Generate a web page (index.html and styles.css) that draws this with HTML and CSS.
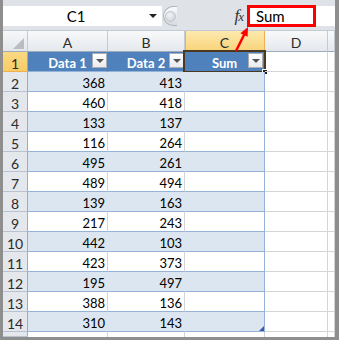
FILE: index.html
```html
<!DOCTYPE html>
<html lang="en">

<head>
    <meta charset="UTF-8">
    <meta name="viewport" content="width=device-width, initial-scale=1.0">
    <title>Sum column</title>
    <link rel="stylesheet" href="styles.css">
</head>

<body>
    <div class="app">
        <!-- Barre de formule -->
        <div class="formula-bar">
            <div class="name-box"><span class="name">C1</span><span class="caret"></span></div>
            <div class="grip"><span class="knob"></span></div>
            <div class="fx-area"><span class="fx">f<span class="fx-x">x</span></span></div>
            <div class="formula-input">Sum</div>
            <div class="callout"></div>
        </div>

        <!-- Feuille -->
        <div class="sheet">
            <div class="corner"><span class="corner-mark"></span></div>
            <div class="col-head">A</div>
            <div class="col-head">B</div>
            <div class="col-head active">C</div>
            <div class="col-head">D</div>
            <div class="col-head edge"></div>

            <div class="row-head active">1</div>
            <div class="th">Data 1<span class="drop"></span></div>
            <div class="th">Data 2<span class="drop"></span></div>
            <div class="th current">Sum<span class="drop"></span><span class="select"><span class="handle"></span></span></div>
            <div class="cell"></div>
            <div class="cell"></div>

            <div class="row-head">2</div>
            <div class="td band">368</div><div class="td band">413</div><div class="td band last"></div>
            <div class="cell"></div><div class="cell"></div>

            <div class="row-head">3</div>
            <div class="td">460</div><div class="td">418</div><div class="td last"></div>
            <div class="cell"></div><div class="cell"></div>

            <div class="row-head">4</div>
            <div class="td band">133</div><div class="td band">137</div><div class="td band last"></div>
            <div class="cell"></div><div class="cell"></div>

            <div class="row-head">5</div>
            <div class="td">116</div><div class="td">264</div><div class="td last"></div>
            <div class="cell"></div><div class="cell"></div>

            <div class="row-head">6</div>
            <div class="td band">495</div><div class="td band">261</div><div class="td band last"></div>
            <div class="cell"></div><div class="cell"></div>

            <div class="row-head">7</div>
            <div class="td">489</div><div class="td">494</div><div class="td last"></div>
            <div class="cell"></div><div class="cell"></div>

            <div class="row-head">8</div>
            <div class="td band">139</div><div class="td band">163</div><div class="td band last"></div>
            <div class="cell"></div><div class="cell"></div>

            <div class="row-head">9</div>
            <div class="td">217</div><div class="td">243</div><div class="td last"></div>
            <div class="cell"></div><div class="cell"></div>

            <div class="row-head">10</div>
            <div class="td band">442</div><div class="td band">103</div><div class="td band last"></div>
            <div class="cell"></div><div class="cell"></div>

            <div class="row-head">11</div>
            <div class="td">423</div><div class="td">373</div><div class="td last"></div>
            <div class="cell"></div><div class="cell"></div>

            <div class="row-head">12</div>
            <div class="td band">195</div><div class="td band">497</div><div class="td band last"></div>
            <div class="cell"></div><div class="cell"></div>

            <div class="row-head">13</div>
            <div class="td">388</div><div class="td">136</div><div class="td last"></div>
            <div class="cell"></div><div class="cell"></div>

            <div class="row-head">14</div>
            <div class="td band">310</div><div class="td band">143</div><div class="td band last"><span class="resize"></span></div>
            <div class="cell"></div><div class="cell"></div>

            <div class="row-head tail"></div>
            <div class="cell tail"></div><div class="cell tail"></div><div class="cell tail"></div>
            <div class="cell tail"></div><div class="cell tail"></div>
        </div>

        <!-- Flèche rouge -->
        <svg class="arrow" width="336" height="60" viewBox="0 0 336 60">
            <line x1="233" y1="51" x2="241.5" y2="34" stroke="#ff0000" stroke-width="2.5" />
            <polygon points="245,27 244.6,36.8 237.4,33.2" fill="#ff0000" />
        </svg>
    </div>
</body>

</html>
```

FILE: styles.css
```css
* {
    box-sizing: border-box;
}

body {
    margin: 0;
    width: 339px;
    height: 340px;
    overflow: hidden;
    background-color: #8e8e8e;
    font-family: Lato, "Liberation Sans", sans-serif;
    color: #000000;
}

.app {
    position: relative;
    margin: 0 4px 3px 3px;
    height: 337px;
    background: #ffffff;
    display: flex;
    flex-direction: column;
}

/* Barre de formule */

.formula-bar {
    position: relative;
    flex: none;
    height: 31px;
    padding-top: 6px;
    display: flex;
    align-items: flex-start;
    background: #dfe3e8;
    border-bottom: 1px solid #c4cad2;
}

.name-box {
    width: 159px;
    height: 20px;
    display: flex;
    align-items: center;
    background: #ffffff;
    font-size: 15px;
    padding-right: 5px;
}

.name {
    flex: 1;
    text-align: center;
}

.caret {
    width: 0;
    height: 0;
    border-left: 4px solid transparent;
    border-right: 4px solid transparent;
    border-top: 4px solid #222222;
}

.grip {
    margin-left: 1px;
    width: 14px;
    height: 20px;
    display: flex;
    align-items: center;
    justify-content: flex-end;
    padding-right: 1px;
    border: 1px solid #aeb5bf;
    border-right: none;
    border-radius: 10px 0 0 10px;
    background: linear-gradient(#fafbfc, #d6dae0);
}

.knob {
    width: 11px;
    height: 11px;
    border-radius: 50%;
    background: radial-gradient(circle at 40% 35%, #f4f5f7, #c6cbd2);
    border: 1px solid #c0c5cc;
}

.fx-area {
    width: 70px;
    height: 20px;
    display: flex;
    justify-content: flex-end;
    align-items: center;
    padding-right: 4px;
}

.fx {
    font-family: "Liberation Serif", serif;
    font-style: italic;
    font-size: 17px;
    color: #333333;
    letter-spacing: -1px;
}

.fx-x {
    font-size: 13px;
}

.formula-input {
    flex: 1;
    height: 20px;
    background: #ffffff;
    padding-left: 9px;
    font-size: 15px;
    line-height: 20px;
}

.callout {
    position: absolute;
    left: 244px;
    top: 5px;
    width: 69px;
    height: 22px;
    border: 3px solid #ff0000;
}

/* Feuille */

.sheet {
    flex: 1;
    display: grid;
    grid-template-columns: 25px 80px 77px 80px 63px 7px;
    grid-template-rows: 21px repeat(14, 20px) 1fr;
    font-size: 13px;
}

.sheet > div {
    position: relative;
    border-right: 1px solid #d4d4d4;
    border-bottom: 1px solid #d4d4d4;
    padding-top: 4px;
    line-height: 15px;
    white-space: nowrap;
}

.corner {
    background: linear-gradient(#f6f7f9, #e3e7ec);
    border-right-color: #c5cbd3 !important;
    border-bottom-color: #9eabbb !important;
}

.corner-mark {
    position: absolute;
    right: 3px;
    bottom: 2px;
    width: 0;
    height: 0;
    border-left: 11px solid transparent;
    border-bottom: 11px solid #b9bec5;
}

.col-head {
    text-align: center;
    font-size: 14px;
    color: #2b2b2b;
    background: linear-gradient(#f8f9fa, #e4e8ed);
    border-right-color: #c5cbd3 !important;
    border-bottom-color: #9eabbb !important;
}

.col-head.active {
    background: linear-gradient(#fde9ae, #f8d47a);
    border-right-color: #f0b050 !important;
    border-bottom-color: #f29436 !important;
    box-shadow: inset 1px 0 0 #f0b050;
}

.row-head {
    text-align: center;
    font-size: 14px;
    color: #2b2b2b;
    background: #e4e8ed;
    border-right-color: #9eabbb !important;
    border-bottom-color: #b9c2ce !important;
}

.row-head.active {
    background: linear-gradient(#fbd982, #f7cc67);
    border-right-color: #f29436 !important;
    border-bottom-color: #f0b050 !important;
}

.row-head.tail {
    padding: 0;
}

.th {
    text-align: center;
    font-weight: bold;
    color: #ffffff;
    background: #4f81bd;
    border-right-color: #4f81bd !important;
    border-bottom-color: #95b3d7 !important;
}

.th.current {
    border-right-color: #95b3d7 !important;
}

.drop {
    position: absolute;
    top: 1px;
    right: 0;
    width: 15px;
    height: 15px;
    background: linear-gradient(#ffffff, #e9ebee);
    border: 1px solid #a9aeb5;
}

.th.current .drop {
    right: 1px;
}

.drop::after {
    content: "";
    position: absolute;
    left: 3px;
    top: 5px;
    border-left: 4px solid transparent;
    border-right: 4px solid transparent;
    border-top: 4px solid #555555;
}

.select {
    position: absolute;
    left: -2px;
    top: -2px;
    right: -2px;
    bottom: -2px;
    border: 2px solid #4a3920;
}

.handle {
    position: absolute;
    right: -4px;
    bottom: -4px;
    width: 6px;
    height: 6px;
    background: #222222;
    border: 1px solid #ffffff;
}

.td {
    text-align: right;
    padding-right: 2px;
    border-bottom-color: #95b3d7 !important;
}

.td.band {
    background: #dce6f1;
    border-right-color: #dce6f1;
}

.td.last {
    border-right-color: #95b3d7;
}

.resize {
    position: absolute;
    right: 0;
    bottom: 0;
    width: 0;
    height: 0;
    border-left: 5px solid transparent;
    border-bottom: 5px solid #3c59b0;
}

.cell.tail {
    border-bottom: none;
}

.arrow {
    position: absolute;
    left: 0;
    top: 0;
    pointer-events: none;
}
```
